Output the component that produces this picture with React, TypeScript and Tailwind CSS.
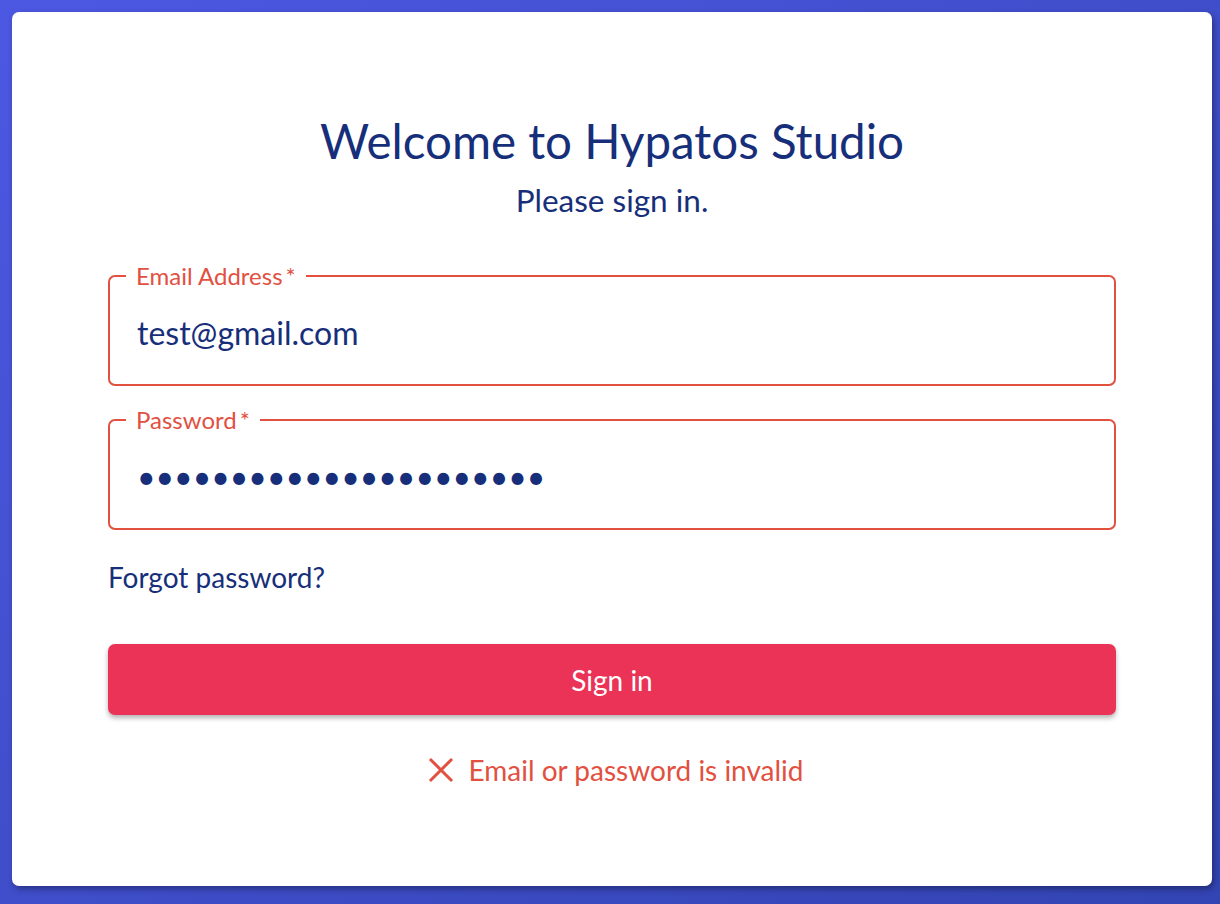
import React from 'react';

const XIcon = () => (
    <svg width="26" height="26" viewBox="0 0 26 26" fill="none" stroke="#e2503f" strokeWidth="3" strokeLinecap="square">
        <path d="M3 3 L23 23 M23 3 L3 23" />
    </svg>
);

const Field = ({ label, children }: { label: string; children: React.ReactNode }) => (
    <fieldset className="border-2 border-[#e2503f] rounded-[7px] px-[16px] m-0">
        <legend className="px-[10px] text-[24px] leading-[28px] text-[#e2503f]">
            {label}
            <span className="ml-[3px]">*</span>
        </legend>
        {children}
    </fieldset>
);

export default function App() {
    return (
        <div
            className="w-[1220px] h-[904px] pt-[12px] pl-[12px] bg-gradient-to-br from-[#4c58e2] to-[#3344b3]"
            style={{ fontFamily: 'Lato, "Open Sans", sans-serif' }}
        >
            <div className="w-[1200px] h-[874px] bg-white rounded-[7px] shadow-[2px_3px_6px_rgba(0,0,0,0.35)] px-[96px] pt-[101px]">
                <h1 className="text-center text-[47.5px] leading-[56px] text-[#172f7a]">Welcome to Hypatos Studio</h1>
                <p className="text-center text-[31.5px] leading-[38px] text-[#172f7a] mt-[12px]">Please sign in.</p>

                <div className="mt-[43px]">
                    <Field label="Email Address">
                        <input
                            readOnly
                            value="test@gmail.com"
                            className="w-full h-[94px] px-[11px] pb-[10px] text-[32px] text-[#172f7a] outline-none bg-transparent"
                            style={{ fontFamily: 'Lato, sans-serif' }}
                        />
                    </Field>
                </div>
                <div className="mt-[20px]">
                    <Field label="Password">
                        <input
                            readOnly
                            type="password"
                            value="abcdefghijklmnopqrstuv"
                            className="w-full h-[94px] px-[11px] pb-[10px] text-[32px] text-[#172f7a] outline-none bg-transparent"
                            style={{ fontFamily: 'Lato, sans-serif' }}
                        />
                    </Field>
                </div>

                <a className="block mt-[30px] text-[28px] leading-[34px] text-[#172f7a] w-fit cursor-pointer">Forgot password?</a>

                <button className="mt-[50px] w-full h-[71px] rounded-[7px] bg-[#ea3356] text-white text-[28px] shadow-[0_3px_5px_rgba(0,0,0,0.3)]">
                    Sign in
                </button>

                <div className="mt-[38px] flex items-center justify-center gap-[14px] pl-[8px] text-[28px] leading-[34px] text-[#e2503f]">
                    <XIcon />
                    <span>Email or password is invalid</span>
                </div>
            </div>
        </div>
    );
}
